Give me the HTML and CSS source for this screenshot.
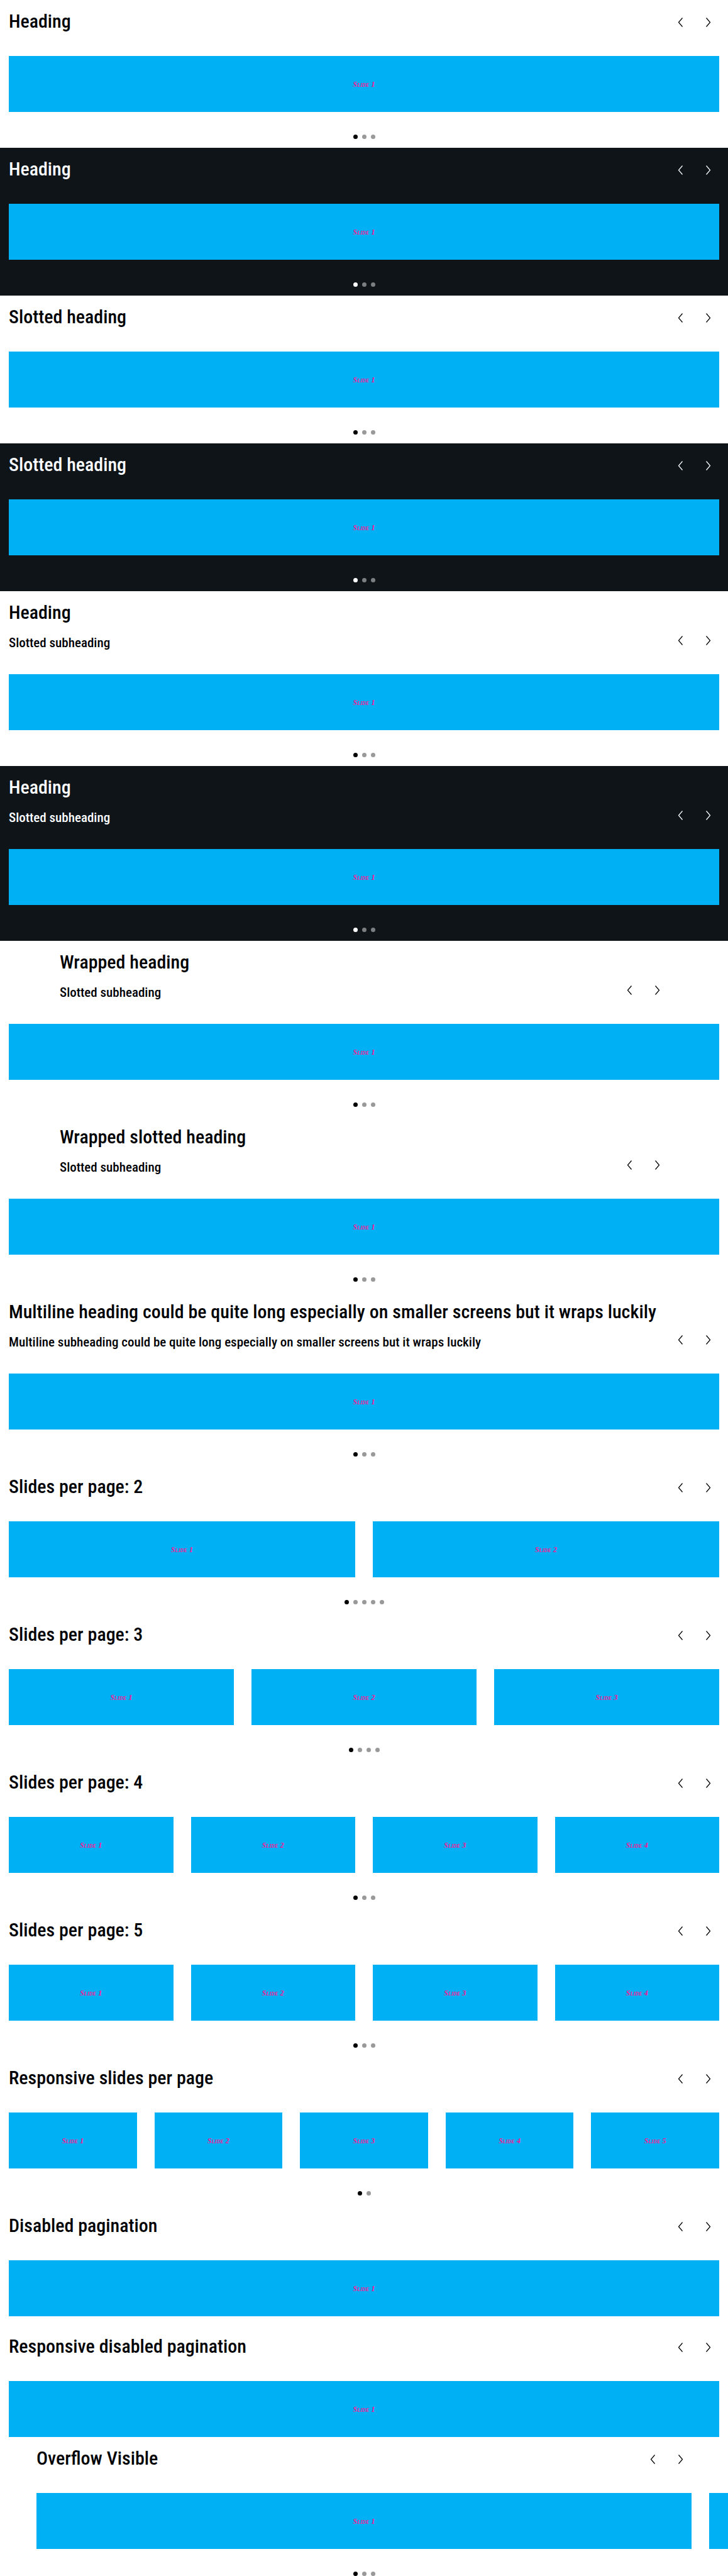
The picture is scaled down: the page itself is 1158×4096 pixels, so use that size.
FILE: index.html
```html
<!DOCTYPE html>
<html lang="en">
<head>
<meta charset="utf-8">
<meta name="viewport" content="width=device-width, initial-scale=1">
<title>Carousel</title>
<link rel="stylesheet" href="styles.css">
</head>
<body>
<svg class="sprite" aria-hidden="true">
  <symbol id="prev" viewBox="0 0 36 36"><path d="M21.500 10.500 L15.500 17.500 L21.500 24.500"/></symbol>
  <symbol id="next" viewBox="0 0 36 36"><path d="M15.500 10.500 L21.500 17.500 L15.500 24.500"/></symbol>
</svg>

<section class="carousel">
  <header class="header">
    <div class="titles"><h2 class="heading">Heading</h2></div>
    <div class="nav"><button class="arrow" type="button" aria-label="Previous"><svg><use href="#prev"/></svg></button><button class="arrow" type="button" aria-label="Next"><svg><use href="#next"/></svg></button></div>
  </header>
  <div class="slides"><div class="slide">Slide 1</div></div>
  <div class="dots"><span class="dot active"></span><span class="dot"></span><span class="dot"></span></div>
</section>

<section class="carousel dark">
  <header class="header">
    <div class="titles"><h2 class="heading">Heading</h2></div>
    <div class="nav"><button class="arrow" type="button" aria-label="Previous"><svg><use href="#prev"/></svg></button><button class="arrow" type="button" aria-label="Next"><svg><use href="#next"/></svg></button></div>
  </header>
  <div class="slides"><div class="slide">Slide 1</div></div>
  <div class="dots"><span class="dot active"></span><span class="dot"></span><span class="dot"></span></div>
</section>

<section class="carousel">
  <header class="header">
    <div class="titles"><h2 class="heading">Slotted heading</h2></div>
    <div class="nav"><button class="arrow" type="button" aria-label="Previous"><svg><use href="#prev"/></svg></button><button class="arrow" type="button" aria-label="Next"><svg><use href="#next"/></svg></button></div>
  </header>
  <div class="slides"><div class="slide">Slide 1</div></div>
  <div class="dots"><span class="dot active"></span><span class="dot"></span><span class="dot"></span></div>
</section>

<section class="carousel dark">
  <header class="header">
    <div class="titles"><h2 class="heading">Slotted heading</h2></div>
    <div class="nav"><button class="arrow" type="button" aria-label="Previous"><svg><use href="#prev"/></svg></button><button class="arrow" type="button" aria-label="Next"><svg><use href="#next"/></svg></button></div>
  </header>
  <div class="slides"><div class="slide">Slide 1</div></div>
  <div class="dots"><span class="dot active"></span><span class="dot"></span><span class="dot"></span></div>
</section>

<section class="carousel">
  <header class="header">
    <div class="titles"><h2 class="heading">Heading</h2><p class="subheading">Slotted subheading</p></div>
    <div class="nav"><button class="arrow" type="button" aria-label="Previous"><svg><use href="#prev"/></svg></button><button class="arrow" type="button" aria-label="Next"><svg><use href="#next"/></svg></button></div>
  </header>
  <div class="slides"><div class="slide">Slide 1</div></div>
  <div class="dots"><span class="dot active"></span><span class="dot"></span><span class="dot"></span></div>
</section>

<section class="carousel dark">
  <header class="header">
    <div class="titles"><h2 class="heading">Heading</h2><p class="subheading">Slotted subheading</p></div>
    <div class="nav"><button class="arrow" type="button" aria-label="Previous"><svg><use href="#prev"/></svg></button><button class="arrow" type="button" aria-label="Next"><svg><use href="#next"/></svg></button></div>
  </header>
  <div class="slides"><div class="slide">Slide 1</div></div>
  <div class="dots"><span class="dot active"></span><span class="dot"></span><span class="dot"></span></div>
</section>

<section class="carousel wrapped">
  <header class="header">
    <div class="titles"><h2 class="heading">Wrapped heading</h2><p class="subheading">Slotted subheading</p></div>
    <div class="nav"><button class="arrow" type="button" aria-label="Previous"><svg><use href="#prev"/></svg></button><button class="arrow" type="button" aria-label="Next"><svg><use href="#next"/></svg></button></div>
  </header>
  <div class="slides"><div class="slide">Slide 1</div></div>
  <div class="dots"><span class="dot active"></span><span class="dot"></span><span class="dot"></span></div>
</section>

<section class="carousel wrapped">
  <header class="header">
    <div class="titles"><h2 class="heading">Wrapped slotted heading</h2><p class="subheading">Slotted subheading</p></div>
    <div class="nav"><button class="arrow" type="button" aria-label="Previous"><svg><use href="#prev"/></svg></button><button class="arrow" type="button" aria-label="Next"><svg><use href="#next"/></svg></button></div>
  </header>
  <div class="slides"><div class="slide">Slide 1</div></div>
  <div class="dots"><span class="dot active"></span><span class="dot"></span><span class="dot"></span></div>
</section>

<section class="carousel">
  <header class="header">
    <div class="titles"><h2 class="heading">Multiline heading could be quite long especially on smaller screens but it wraps luckily</h2><p class="subheading">Multiline subheading could be quite long especially on smaller screens but it wraps luckily</p></div>
    <div class="nav"><button class="arrow" type="button" aria-label="Previous"><svg><use href="#prev"/></svg></button><button class="arrow" type="button" aria-label="Next"><svg><use href="#next"/></svg></button></div>
  </header>
  <div class="slides"><div class="slide">Slide 1</div></div>
  <div class="dots"><span class="dot active"></span><span class="dot"></span><span class="dot"></span></div>
</section>

<section class="carousel">
  <header class="header">
    <div class="titles"><h2 class="heading">Slides per page: 2</h2></div>
    <div class="nav"><button class="arrow" type="button" aria-label="Previous"><svg><use href="#prev"/></svg></button><button class="arrow" type="button" aria-label="Next"><svg><use href="#next"/></svg></button></div>
  </header>
  <div class="slides"><div class="slide">Slide 1</div><div class="slide">Slide 2</div></div>
  <div class="dots"><span class="dot active"></span><span class="dot"></span><span class="dot"></span><span class="dot"></span><span class="dot"></span></div>
</section>

<section class="carousel">
  <header class="header">
    <div class="titles"><h2 class="heading">Slides per page: 3</h2></div>
    <div class="nav"><button class="arrow" type="button" aria-label="Previous"><svg><use href="#prev"/></svg></button><button class="arrow" type="button" aria-label="Next"><svg><use href="#next"/></svg></button></div>
  </header>
  <div class="slides"><div class="slide">Slide 1</div><div class="slide">Slide 2</div><div class="slide">Slide 3</div></div>
  <div class="dots"><span class="dot active"></span><span class="dot"></span><span class="dot"></span><span class="dot"></span></div>
</section>

<section class="carousel">
  <header class="header">
    <div class="titles"><h2 class="heading">Slides per page: 4</h2></div>
    <div class="nav"><button class="arrow" type="button" aria-label="Previous"><svg><use href="#prev"/></svg></button><button class="arrow" type="button" aria-label="Next"><svg><use href="#next"/></svg></button></div>
  </header>
  <div class="slides"><div class="slide">Slide 1</div><div class="slide">Slide 2</div><div class="slide">Slide 3</div><div class="slide">Slide 4</div></div>
  <div class="dots"><span class="dot active"></span><span class="dot"></span><span class="dot"></span></div>
</section>

<section class="carousel">
  <header class="header">
    <div class="titles"><h2 class="heading">Slides per page: 5</h2></div>
    <div class="nav"><button class="arrow" type="button" aria-label="Previous"><svg><use href="#prev"/></svg></button><button class="arrow" type="button" aria-label="Next"><svg><use href="#next"/></svg></button></div>
  </header>
  <div class="slides"><div class="slide">Slide 1</div><div class="slide">Slide 2</div><div class="slide">Slide 3</div><div class="slide">Slide 4</div></div>
  <div class="dots"><span class="dot active"></span><span class="dot"></span><span class="dot"></span></div>
</section>

<section class="carousel">
  <header class="header">
    <div class="titles"><h2 class="heading">Responsive slides per page</h2></div>
    <div class="nav"><button class="arrow" type="button" aria-label="Previous"><svg><use href="#prev"/></svg></button><button class="arrow" type="button" aria-label="Next"><svg><use href="#next"/></svg></button></div>
  </header>
  <div class="slides"><div class="slide">Slide 1</div><div class="slide">Slide 2</div><div class="slide">Slide 3</div><div class="slide">Slide 4</div><div class="slide">Slide 5</div></div>
  <div class="dots"><span class="dot active"></span><span class="dot"></span></div>
</section>

<section class="carousel">
  <header class="header">
    <div class="titles"><h2 class="heading">Disabled pagination</h2></div>
    <div class="nav"><button class="arrow" type="button" aria-label="Previous"><svg><use href="#prev"/></svg></button><button class="arrow" type="button" aria-label="Next"><svg><use href="#next"/></svg></button></div>
  </header>
  <div class="slides"><div class="slide">Slide 1</div></div>
</section>

<section class="carousel">
  <header class="header">
    <div class="titles"><h2 class="heading">Responsive disabled pagination</h2></div>
    <div class="nav"><button class="arrow" type="button" aria-label="Previous"><svg><use href="#prev"/></svg></button><button class="arrow" type="button" aria-label="Next"><svg><use href="#next"/></svg></button></div>
  </header>
  <div class="slides"><div class="slide">Slide 1</div></div>
</section>

<section class="carousel overflow">
  <header class="header">
    <div class="titles"><h2 class="heading">Overflow Visible</h2></div>
    <div class="nav"><button class="arrow" type="button" aria-label="Previous"><svg><use href="#prev"/></svg></button><button class="arrow" type="button" aria-label="Next"><svg><use href="#next"/></svg></button></div>
  </header>
  <div class="slides"><div class="slide">Slide 1</div><div class="slide" aria-hidden="true"></div></div>
  <div class="dots"><span class="dot active"></span><span class="dot"></span><span class="dot"></span></div>
</section>
</body>
</html>
```
FILE: styles.css
```css
* { box-sizing: border-box; }

body {
  margin: 0;
  background: #fff;
  font-family: "Roboto Condensed", Roboto, sans-serif;
}

.sprite { display: none; }

.carousel {
  padding: 14px;
  background: #fff;
  color: #010205;
}

.carousel.dark {
  background: #0e1418;
  color: #fbfcff;
}

.header {
  display: flex;
  align-items: flex-end;
  justify-content: space-between;
  margin-bottom: 35px;
}

.wrapped .header { padding: 0 81px; }

.titles { flex: 1; min-width: 0; }

.heading {
  margin: 0;
  font-size: 30px;
  font-weight: 500;
  line-height: 40px;
}

.subheading {
  margin: 14px 0 0;
  font-size: 21px;
  font-weight: 500;
  line-height: 29px;
}

.nav {
  display: flex;
  gap: 8px;
  margin-left: -80px;
}

.arrow {
  width: 36px;
  height: 36px;
  padding: 0;
  border: 0;
  background: none;
  color: inherit;
  cursor: pointer;
}

.arrow svg {
  display: block;
  width: 36px;
  height: 36px;
  fill: none;
  stroke: currentColor;
  stroke-width: 1.25;
}

.slides {
  display: flex;
  gap: 28px;
}

.slide {
  display: flex;
  flex: 1;
  align-items: center;
  justify-content: center;
  height: 89px;
  background: #00b0f4;
  color: #ff1493;
  font: italic small-caps bold 12px/16px "Liberation Serif", serif;
}

.dots {
  display: flex;
  gap: 7px;
  justify-content: center;
  margin-top: 36px;
}

.dot {
  width: 7px;
  height: 7px;
  border-radius: 50%;
  background: #999;
}

.dot.active { background: #000; }
.dark .dot { background: #7c7f81; }
.dark .dot.active { background: #fff; }

/* The next slide peeks in at the window's edge. */
.carousel.overflow {
  padding: 0 5%;
  overflow: hidden;
}

.overflow .slide { flex: 0 0 100%; }
```
